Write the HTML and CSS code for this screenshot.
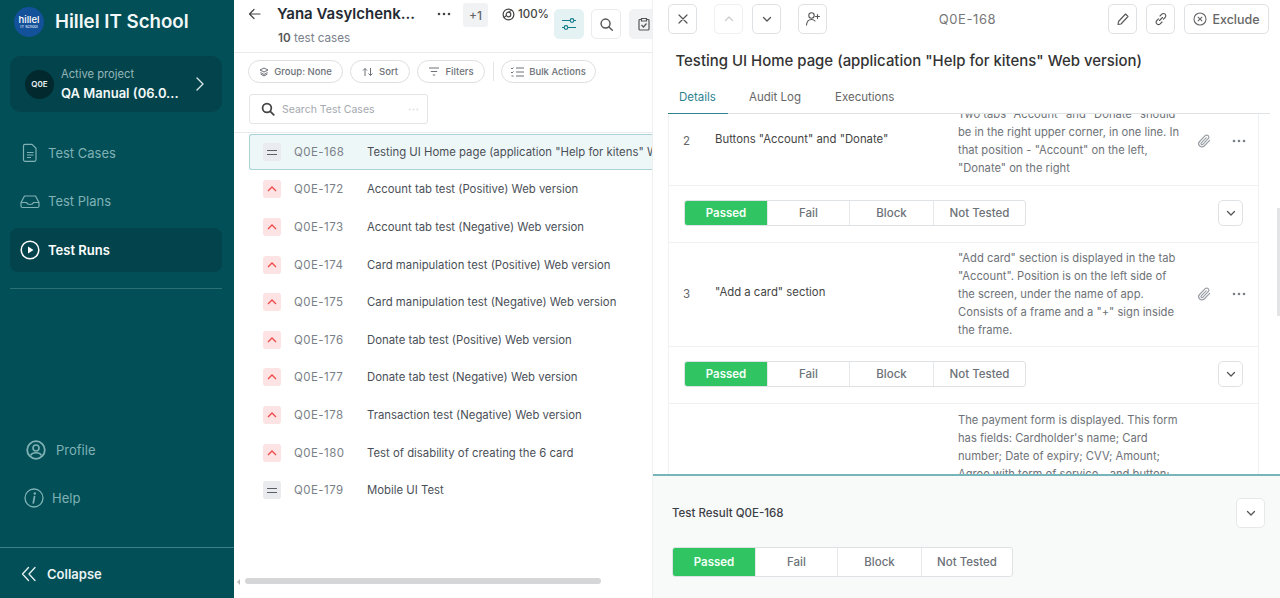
FILE: index.html
```html
<!DOCTYPE html>
<html lang="en">
<head>
<meta charset="utf-8">
<title>Test Runs</title>
<link rel="stylesheet" href="styles.css">
</head>
<body>
<svg class="defs" width="0" height="0" aria-hidden="true">
  <symbol id="chev-down" viewBox="0 0 12 12"><path d="M2.5 4.5 6 8l3.5-3.5" fill="none" stroke="currentColor" stroke-width="1.3" stroke-linecap="round" stroke-linejoin="round"/></symbol>
  <symbol id="clip" viewBox="0 0 16 16"><path d="M13.6 7.4 8.2 13a3.2 3.2 0 0 1-4.6-4.5l5.6-5.8a2.1 2.1 0 0 1 3 3L6.8 11.3a1 1 0 0 1-1.5-1.5L10.2 4.8" fill="none" stroke="currentColor" stroke-width="1.2" stroke-linecap="round"/></symbol>
  <symbol id="dots" viewBox="0 0 14 4"><circle cx="2" cy="2" r="1.3" fill="currentColor"/><circle cx="7" cy="2" r="1.3" fill="currentColor"/><circle cx="12" cy="2" r="1.3" fill="currentColor"/></symbol>
  <symbol id="search" viewBox="0 0 16 16"><circle cx="7" cy="7" r="4.8" fill="none" stroke="currentColor" stroke-width="1.5"/><path d="m10.6 10.6 3.6 3.6" stroke="currentColor" stroke-width="1.5" stroke-linecap="round"/></symbol>
  <symbol id="search-bold" viewBox="0 0 16 16"><circle cx="6.8" cy="6.8" r="5" fill="none" stroke="currentColor" stroke-width="2"/><path d="m10.6 10.6 4 4" stroke="currentColor" stroke-width="2" stroke-linecap="round"/></symbol>
  <symbol id="up-red" viewBox="0 0 10 6"><path d="m1 5 4-4 4 4" fill="none" stroke="currentColor" stroke-width="1.3"/></symbol>
</svg>
<div class="app">
  <aside class="sidebar">
    <div class="brand">
      <div class="logo"><span class="logo-a">hillel</span><span class="logo-b">IT school</span></div>
      <span class="brand-name">Hillel IT School</span>
    </div>
    <div class="project">
      <span class="avatar">Q0E</span>
      <div class="project-text">
        <span class="project-label">Active project</span>
        <span class="project-name">QA Manual (06.0...</span>
      </div>
      <svg class="project-chev" width="10" height="16" viewBox="0 0 10 16"><path d="m2 2 6 6-6 6" fill="none" stroke="currentColor" stroke-width="1.4" stroke-linecap="round" stroke-linejoin="round"/></svg>
    </div>
    <nav class="nav">
      <a class="nav-item">
        <svg class="nav-icon" width="20" height="20" viewBox="0 0 20 20"><path d="M5 1.5h7l4 4V17a1.5 1.5 0 0 1-1.5 1.5H5A1.5 1.5 0 0 1 3.5 17V3A1.5 1.5 0 0 1 5 1.5Z" fill="none" stroke="currentColor" stroke-width="1.2" transform="translate(0 -.2)"/><path d="M7 9.5h6.500M7 12h6.500M7 14.500h4" stroke="currentColor" stroke-width="1.1"/></svg>
        <span>Test Cases</span>
      </a>
      <a class="nav-item">
        <svg class="nav-icon" width="20" height="20" viewBox="0 0 20 20"><path d="M1 11.5 4.500 5h11l3.500 6.500V15a1.500 1.500 0 0 1-1.500 1.500h-15A1.500 1.500 0 0 1 1 15Z" fill="none" stroke="currentColor" stroke-width="1.2" stroke-linejoin="round"/><path d="M1 11.5h5.500c.5 1.500 1.800 2 3.500 2s3-.5 3.500-2H19" fill="none" stroke="currentColor" stroke-width="1.2"/></svg>
        <span>Test Plans</span>
      </a>
      <a class="nav-item active">
        <svg class="nav-icon" width="20" height="20" viewBox="0 0 20 20"><circle cx="10" cy="10" r="8.8" fill="none" stroke="currentColor" stroke-width="1.5"/><path d="M8 6.5v7l5.500-3.500Z" fill="currentColor"/></svg>
        <span>Test Runs</span>
      </a>
    </nav>
    <div class="side-rule"></div>
    <div class="side-spacer"></div>
    <a class="util profile">
      <svg width="20" height="20" viewBox="0 0 20 20"><circle cx="10" cy="10" r="8.800" fill="none" stroke="currentColor" stroke-width="1.8"/><circle cx="10" cy="8" r="3" fill="none" stroke="currentColor" stroke-width="1.6"/><path d="M4.500 15.500c1-2 3-2.800 5.500-2.800s4.500.8 5.500 2.800" fill="none" stroke="currentColor" stroke-width="1.6"/></svg>
      <span>Profile</span>
    </a>
    <a class="util help">
      <svg width="20" height="20" viewBox="0 0 20 20"><circle cx="10" cy="10" r="9" fill="none" stroke="currentColor" stroke-width="1.3"/><circle cx="10.800" cy="5.500" r="1.200" fill="currentColor"/><path d="M10.500 8.500 9.300 15" stroke="currentColor" stroke-width="1.700" stroke-linecap="round"/></svg>
      <span>Help</span>
    </a>
    <div class="collapse">
      <svg width="16" height="16" viewBox="0 0 16 16"><path d="M7.500 1.500 1.500 8l6 6.500M14 1.500 8 8l6 6.500" fill="none" stroke="currentColor" stroke-width="1.300" stroke-linecap="round" stroke-linejoin="round"/></svg>
      <span>Collapse</span>
    </div>
  </aside>

  <section class="list-pane">
    <header class="list-head">
      <svg class="back" width="13" height="12" viewBox="0 0 13 12"><path d="M12 6H1.500M6 1.500 1.500 6 6 10.500" fill="none" stroke="currentColor" stroke-width="1.200" stroke-linecap="round" stroke-linejoin="round"/></svg>
      <div class="run-title">
        <span class="run-name">Yana Vasylchenk...</span>
        <span class="run-count"><b>10</b> test cases</span>
      </div>
      <svg class="run-dots" width="14" height="4"><use href="#dots"/></svg>
      <span class="plus">+1</span>
      <span class="progress">
        <svg width="13" height="13" viewBox="0 0 14 14"><circle cx="7" cy="7" r="5.800" fill="none" stroke="currentColor" stroke-width="1.300"/><circle cx="7" cy="7" r="2.500" fill="none" stroke="currentColor" stroke-width="1.200"/><path d="M7 4.500 11 2M4.800 8 2 10.500" stroke="currentColor" stroke-width="1.100"/></svg>100%
      </span>
      <button class="icon-btn tune">
        <svg width="16" height="14" viewBox="0 0 16 14"><path d="M1 3.500h8M13 3.500h2M1 10.500h2M7 10.500h8" stroke="currentColor" stroke-width="1.200"/><circle cx="11" cy="3.500" r="1.800" fill="none" stroke="currentColor" stroke-width="1.200"/><circle cx="5" cy="10.500" r="1.800" fill="none" stroke="currentColor" stroke-width="1.200"/></svg>
      </button>
      <button class="icon-btn"><svg width="15" height="15"><use href="#search"/></svg></button>
      <button class="icon-btn soft">
        <svg width="12" height="14" viewBox="0 0 12 14"><path d="M3.500 2.500H2A1 1 0 0 0 1 3.500V12a1 1 0 0 0 1 1h8a1 1 0 0 0 1-1V3.500a1 1 0 0 0-1-1H8.500M3.500 1.500h5V4h-5ZM3.500 8l2 2 3-3.500" fill="none" stroke="currentColor" stroke-width="1.200"/></svg>
      </button>
    </header>
    <div class="tools">
      <span class="pill group"><svg width="10" height="10" viewBox="0 0 10 10"><path d="M5 1 9 3 5 5 1 3ZM1.500 5.500 5 7.500l3.500-2M1.500 7 5 9l3.500-2" fill="none" stroke="currentColor" stroke-width="1"/></svg>Group: None</span>
      <span class="pill sort"><svg width="12" height="10" viewBox="0 0 12 10"><path d="M3 9V1.500M1 3.500l2-2 2 2M8.500 1v7.500M6.500 6.500l2 2 2-2" fill="none" stroke="currentColor" stroke-width="1"/></svg>Sort</span>
      <span class="pill filters"><svg width="12" height="9" viewBox="0 0 12 9"><path d="M1 1h10M2.800 4.500h6.400M4.800 8h2.400" stroke="currentColor" stroke-width="1"/></svg>Filters</span>
      <span class="tool-sep"></span>
      <span class="pill bulk"><svg width="13" height="10" viewBox="0 0 13 10"><path d="M5 1h8M5 5h8M5 9h8M0 1l1 1 1.500-1.500M0 5l1 1 1.500-1.500M.5 9h2" fill="none" stroke="currentColor" stroke-width="1"/></svg>Bulk Actions</span>
    </div>
    <div class="search-row">
      <div class="search-box">
        <svg class="search-icon" width="14" height="14"><use href="#search-bold"/></svg>
        <span class="search-text">Search Test Cases</span>
        <svg class="search-dots" width="11" height="3"><use href="#dots"/></svg>
      </div>
    </div>
    <ul class="cases">
      <li class="case selected"><span class="pri med"><i></i></span><span class="cid">Q0E-168</span><span class="cname">Testing UI Home page (application "Help for kitens" Web version)</span></li>
      <li class="case"><span class="pri high"><svg width="10" height="6"><use href="#up-red"/></svg></span><span class="cid">Q0E-172</span><span class="cname">Account tab test (Positive) Web version</span></li>
      <li class="case"><span class="pri high"><svg width="10" height="6"><use href="#up-red"/></svg></span><span class="cid">Q0E-173</span><span class="cname">Account tab test (Negative) Web version</span></li>
      <li class="case"><span class="pri high"><svg width="10" height="6"><use href="#up-red"/></svg></span><span class="cid">Q0E-174</span><span class="cname">Card manipulation test (Positive) Web version</span></li>
      <li class="case"><span class="pri high"><svg width="10" height="6"><use href="#up-red"/></svg></span><span class="cid">Q0E-175</span><span class="cname">Card manipulation test (Negative) Web version</span></li>
      <li class="case"><span class="pri high"><svg width="10" height="6"><use href="#up-red"/></svg></span><span class="cid">Q0E-176</span><span class="cname">Donate tab test (Positive) Web version</span></li>
      <li class="case"><span class="pri high"><svg width="10" height="6"><use href="#up-red"/></svg></span><span class="cid">Q0E-177</span><span class="cname">Donate tab test (Negative) Web version</span></li>
      <li class="case"><span class="pri high"><svg width="10" height="6"><use href="#up-red"/></svg></span><span class="cid">Q0E-178</span><span class="cname">Transaction test (Negative) Web version</span></li>
      <li class="case"><span class="pri high"><svg width="10" height="6"><use href="#up-red"/></svg></span><span class="cid">Q0E-180</span><span class="cname">Test of disability of creating the 6 card</span></li>
      <li class="case"><span class="pri med"><i></i></span><span class="cid">Q0E-179</span><span class="cname">Mobile UI Test</span></li>
    </ul>
    <div class="hscroll"><span class="hscroll-arrow"></span><span class="hscroll-thumb"></span></div>
  </section>

  <section class="detail">
    <header class="detail-bar">
      <button class="sq"><svg width="12" height="12" viewBox="0 0 12 12"><path d="m2 2 8 8M10 2l-8 8" stroke="currentColor" stroke-width="1.200" stroke-linecap="round"/></svg></button>
      <button class="sq faded"><svg width="12" height="12" viewBox="0 0 12 12"><path d="M2.500 7.500 6 4l3.500 3.500" fill="none" stroke="currentColor" stroke-width="1.300" stroke-linecap="round" stroke-linejoin="round"/></svg></button>
      <button class="sq"><svg width="12" height="12"><use href="#chev-down"/></svg></button>
      <button class="sq"><svg width="16" height="16" viewBox="0 0 16 16"><circle cx="6.500" cy="4.500" r="2.700" fill="none" stroke="currentColor" stroke-width="1.100"/><path d="M1.500 14c.3-3.500 2.200-5.500 5-5.500 1.500 0 2.700.5 3.500 1.500M12.500 3.500v4M10.500 5.500h4" fill="none" stroke="currentColor" stroke-width="1.100" stroke-linecap="round"/></svg></button>
      <span class="detail-id">Q0E-168</span>
      <button class="sq"><svg width="14" height="14" viewBox="0 0 14 14"><path d="M9.500 2 12 4.500 5 12l-3 .5.500-3Z" fill="none" stroke="currentColor" stroke-width="1.100" stroke-linejoin="round"/></svg></button>
      <button class="sq"><svg width="14" height="14" viewBox="0 0 14 14"><path d="M6 4l1.800-1.800a2.300 2.300 0 0 1 3.300 3.300L9.500 7.200M8 10l-1.800 1.800a2.300 2.300 0 0 1-3.300-3.300l1.600-1.700M5.500 8.500l3-3" fill="none" stroke="currentColor" stroke-width="1.100" stroke-linecap="round"/></svg></button>
      <button class="exclude"><svg width="14" height="14" viewBox="0 0 14 14"><circle cx="7" cy="7" r="6" fill="none" stroke="currentColor" stroke-width="1.100"/><path d="m4.800 4.800 4.400 4.400M9.200 4.800 4.800 9.200" stroke="currentColor" stroke-width="1.100"/></svg>Exclude</button>
    </header>
    <h1 class="detail-title">Testing UI Home page (application "Help for kitens" Web version)</h1>
    <div class="tabs">
      <span class="tab current">Details</span>
      <span class="tab">Audit Log</span>
      <span class="tab">Executions</span>
    </div>
    <div class="steps-view">
      <div class="steps">
        <div class="step">
          <span class="step-no">2</span>
          <span class="step-name">Buttons "Account" and "Donate"</span>
          <p class="step-exp">Two tabs "Account" and "Donate" should be in the right upper corner, in one line. In that position - "Account" on the left, "Donate" on the right</p>
          <svg class="step-clip" width="16" height="16"><use href="#clip"/></svg>
          <svg class="step-dots" width="14" height="4"><use href="#dots"/></svg>
        </div>
        <div class="step-status">
          <div class="seg"><span class="seg-on">Passed</span><span>Fail</span><span>Block</span><span>Not Tested</span></div>
          <button class="sq mini"><svg width="12" height="12"><use href="#chev-down"/></svg></button>
        </div>
        <div class="step">
          <span class="step-no">3</span>
          <span class="step-name">"Add a card" section</span>
          <p class="step-exp">"Add card" section is displayed in the tab "Account". Position is on the left side of the screen, under the name of app. Consists of a frame and a "+" sign inside the frame.</p>
          <svg class="step-clip" width="16" height="16"><use href="#clip"/></svg>
          <svg class="step-dots" width="14" height="4"><use href="#dots"/></svg>
        </div>
        <div class="step-status">
          <div class="seg"><span class="seg-on">Passed</span><span>Fail</span><span>Block</span><span>Not Tested</span></div>
          <button class="sq mini"><svg width="12" height="12"><use href="#chev-down"/></svg></button>
        </div>
        <div class="step">
          <span class="step-no"></span>
          <span class="step-name"></span>
          <p class="step-exp">The payment form is displayed. This form has fields: Cardholder's name; Card number; Date of expiry; CVV; Amount; Agree with term of service - and button;</p>
        </div>
      </div>
      <span class="vscroll"></span>
    </div>
    <footer class="result">
      <div class="result-head">
        <span class="result-title">Test Result Q0E-168</span>
        <button class="sq result-chev"><svg width="12" height="12"><use href="#chev-down"/></svg></button>
      </div>
      <div class="seg tall"><span class="seg-on">Passed</span><span>Fail</span><span>Block</span><span>Not Tested</span></div>
    </footer>
  </section>
</div>
</body>
</html>
```
FILE: styles.css
```css
* { box-sizing: border-box; }
html, body { margin: 0; height: 598px; overflow: hidden; }
body { font-family: Inter, "Liberation Sans", sans-serif; font-size: 12px; color: #444; background: #fff; }
.defs { position: absolute; }
button { font: inherit; background: #fff; padding: 0; cursor: pointer; }
ul { list-style: none; margin: 0; padding: 0; }
p, h1 { margin: 0; }

.app { display: flex; height: 598px; }

/* Sidebar */
.sidebar { width: 234px; flex: none; background: #024f57; display: flex; flex-direction: column; color: #7fb1b5; }
.brand { display: flex; align-items: center; gap: 11px; height: 44px; padding: 0 0 0 14px; }
.logo { width: 30px; height: 30px; border-radius: 50%; background: #13519b; color: #fff; display: flex; flex-direction: column; align-items: center; justify-content: center; }
.logo-a { font-size: 9.5px; line-height: 9px; font-weight: 500; }
.logo-b { font-size: 4px; line-height: 5px; }
.brand-name { color: #f2f8f8; font-size: 18.7px; font-weight: 600; transform: translateY(-1px); }
.project { margin: 12px 12px 0 10px; height: 56px; border-radius: 10px; background: #03444c; display: flex; align-items: center; padding: 0 17px 0 15px; }
.avatar { flex: none; width: 29px; height: 29px; border-radius: 50%; background: #01292e; color: #e8f0f0; font-size: 8px; font-weight: 600; display: flex; align-items: center; justify-content: center; }
.project-text { display: flex; flex-direction: column; margin-left: 7px; flex: 1; gap: 2px; }
.project-label { font-size: 11.2px; line-height: 15px; color: #96b6b8; }
.project-name { font-size: 13px; line-height: 18px; font-weight: 600; color: #f2f8f8; white-space: nowrap; }
.project-chev { color: #d6e5e6; flex: none; }
.nav { margin: 19px 12px 0 10px; display: flex; flex-direction: column; gap: 4px; }
.nav-item { display: flex; align-items: center; gap: 8px; height: 44px; padding: 0 0 0 10px; border-radius: 8px; font-size: 13px; }
.nav-item.active { background: #03444c; color: #fff; font-weight: 600; margin-top: 1px; }
.side-rule { margin: 16px 12px 0 10px; height: 1px; background: #2b6f75; }
.side-spacer { flex: 1; }
.util { display: flex; align-items: center; font-size: 13px; height: 48px; }
.profile { padding-left: 26px; gap: 10px; }
.help { padding-left: 24px; gap: 8px; margin-bottom: 25px; }
.collapse { height: 51px; border-top: 1px solid #3d8087; display: flex; align-items: center; gap: 10px; padding: 2px 0 0 21px; color: #e9f3f3; font-size: 13px; font-weight: 600; }

/* List pane */
.list-pane { width: 418px; flex: none; display: flex; flex-direction: column; overflow: hidden; position: relative; }
.list-head { height: 53px; flex: none; border-bottom: 1px solid #e8eaec; display: flex; align-items: flex-start; padding-left: 14px; }
.back { margin: 8px 0 0; color: #444; flex: none; }
.run-title { display: flex; flex-direction: column; margin-left: 16px; width: 146px; flex: none; padding-top: 4px; }
.run-name { font-size: 15px; font-weight: 600; line-height: 20px; color: #242a33; white-space: nowrap; }
.run-count { font-size: 11.7px; line-height: 16px; margin-top: 6px; margin-left: 1px; color: #7a818c; }
.run-count b { font-weight: 600; color: #555; }
.run-dots { margin: 12px 0 0 14px; flex: none; color: #444; }
.plus { flex: none; width: 25px; height: 24px; margin: 3px 0 0 12px; background: #f1f2f3; border-radius: 3px; display: flex; align-items: center; justify-content: center; color: #666; font-weight: 500; }
.progress { flex: none; margin: 6px 0 0 14px; display: flex; align-items: center; gap: 3px; font-size: 11.5px; font-weight: 500; color: #444; white-space: nowrap; height: 16px; }
.icon-btn { flex: none; width: 30px; height: 30px; margin-top: 9px; margin-left: 7px; border: 1px solid #e9ebee; border-radius: 5px; color: #555; display: flex; align-items: center; justify-content: center; }
.tune { margin-left: 5px; background: #e5f2f4; border-color: #e5f2f4; color: #157c8a; }
.soft { background: #f1f2f3; border-color: #f1f2f3; margin-left: 8px; }
.tools { flex: none; display: flex; align-items: center; gap: 7px; padding: 6px 0 0 14px; height: 31px; }
.pill { height: 23px; border: 1px solid #dcdfe2; border-radius: 12px; display: flex; align-items: center; justify-content: center; gap: 5px; font-size: 9.5px; font-weight: 500; color: #6d7278; }
.pill.group { width: 95px; }
.pill.sort { width: 60px; }
.pill.filters { width: 68px; }
.pill.bulk { width: 95px; }
.tool-sep { width: 1px; height: 19px; background: #e2e4e6; margin: 0 0 0 1px; }
.search-row { flex: none; padding: 10px 0 0 15px; height: 49px; border-bottom: 1px solid #e8eaec; }
.search-box { width: 179px; height: 30px; border: 1px solid #e3e5e8; border-radius: 3px; display: flex; align-items: center; padding: 0 8px 0 11px; }
.search-icon { color: #444; flex: none; }
.search-text { margin-left: 7px; padding-top: 1px; font-size: 10.5px; color: #a5a9af; flex: 1; }
.search-dots { color: #dfe1e3; }
.cases { flex: 1; padding-top: 1px; }
.case { display: flex; align-items: center; height: 37.6px; padding-left: 29px; white-space: nowrap; }
.case.selected { margin-left: 15px; margin-bottom: .6px; padding-left: 13px; height: 36px; background: #eef7f8; border: 1px solid #a9d3d8; border-right: 0; border-radius: 3px 0 0 3px; }
.pri { width: 18px; height: 18px; flex: none; border-radius: 3px; display: flex; align-items: center; justify-content: center; }
.pri.high { background: #fde3e3; color: #ee4a4a; }
.pri.med { background: #e9ebee; }
.pri.med i { display: block; width: 10px; height: 5px; border-top: 1.5px solid #5b6168; border-bottom: 1.5px solid #5b6168; }
.cid { margin-left: 13px; width: 73px; flex: none; color: #7a8087; letter-spacing: .45px; font-size: 11.5px; }
.cname { color: #4a4f57; font-size: 11.35px; }
.hscroll { position: absolute; left: 0; right: 0; bottom: 14px; height: 6px; }
.hscroll-thumb { position: absolute; left: 11px; width: 356px; height: 6px; border-radius: 3px; background: #d4d6d7; }
.hscroll-arrow { position: absolute; left: 3px; top: 1px; border: 3px solid transparent; border-right-color: #bbb; border-left-width: 0; }

/* Detail pane */
.detail { flex: 1; min-width: 0; display: flex; flex-direction: column; border-left: 1px solid #eef0f1; color: #555; }
.detail-bar { flex: none; height: 37px; display: flex; align-items: flex-start; padding: 4px 11px 0 15px; gap: 9px; }
.sq { flex: none; width: 29px; height: 30px; border: 1px solid #dfe2e5; border-radius: 5px; color: #555; display: flex; align-items: center; justify-content: center; background: #fff; }
.detail-bar .sq:nth-child(2) { margin-left: 8px; }
.detail-bar .sq:nth-child(4) { margin-left: 8px; }
.faded { color: #ccc; border-color: #eef0f1; }
.detail-id { flex: 1; text-align: center; font-size: 13px; line-height: 30px; letter-spacing: .6px; color: #777; }
.exclude { flex: none; width: 85px; height: 30px; border: 1px solid #dfe2e5; border-radius: 5px; display: flex; align-items: center; justify-content: center; gap: 5px; color: #666; font-size: 12.5px; font-weight: 500; }
.detail-title { flex: none; margin: 13px 0 0 22.5px; font-size: 14.95px; line-height: 22px; font-weight: 500; color: #333; }
.tabs { flex: none; margin: 15px 10px 0 15px; height: 27px; display: flex; border-bottom: 1px solid #dfe3e6; }
.tab { height: 27px; padding: 0 0 0 33px; font-size: 11.5px; line-height: 20px; color: #666; }
.tab:nth-child(3) { padding-left: 34px; }
.tab.current { padding: 0 11px; color: #2f8391; border-bottom: 1px solid #2f8391; width: 60px; }
.tab.current + .tab { padding-left: 21px; }
.steps-view { flex: 1; min-height: 0; overflow: hidden; position: relative; }
.steps { margin: -15px 21px 0 15px; border-left: 1px solid #f0f1f2; border-right: 1px solid #f0f1f2; }
.step { display: grid; grid-template-columns: 46px 243px 226px 40px 30px; align-items: center; padding: 6px 0 7px; border-bottom: 1px solid #eff0f1; }
.step:first-child { padding-bottom: 8px; }
.step:last-child { padding-top: 7px; }
.step-no { padding-left: 14px; font-size: 11.5px; color: #666; }
.step-name { font-size: 11.35px; color: #444; transform: translateY(-2px); }
.step-exp { font-size: 11.2px; line-height: 18px; color: #6e7278; }
.step-clip { color: #9aa0a6; justify-self: center; }
.step-dots { color: #7b8087; justify-self: center; }
.step-status { height: 57px; display: flex; align-items: center; justify-content: space-between; padding: 0 15px 2px 15px; border-bottom: 1px solid #eff0f1; }
.seg { display: flex; height: 26px; width: 342px; border: 1px solid #dfe2e5; border-radius: 3px; background: #fff; overflow: hidden; }
.seg span { width: 82px; flex: none; display: flex; align-items: center; justify-content: center; font-size: 11.5px; font-weight: 500; color: #6d7278; border-left: 1px solid #e6e8ea; }
.seg span:nth-child(3) { width: 84px; }
.seg span:last-child { flex: 1; }
.seg .seg-on { background: #31c463; color: #f4fff8; border-left: 0; font-weight: 600; }
.mini { width: 25px; height: 26px; }
.vscroll { position: absolute; right: 0; top: 94px; width: 3px; height: 108px; background: #e3e4e5; }
.result { flex: none; height: 124px; background: #f8f9f9; border-top: 2px solid #77b5ba; padding: 0 15px 0 19px; position: relative; }
.result-head { display: flex; align-items: center; justify-content: space-between; height: 71px; padding-top: 2px; }
.result-title { font-size: 11.5px; font-weight: 500; color: #3c4046; }
.result-chev { border-color: #e6e8ea; }
.seg.tall { height: 30px; width: 341px; }
```
